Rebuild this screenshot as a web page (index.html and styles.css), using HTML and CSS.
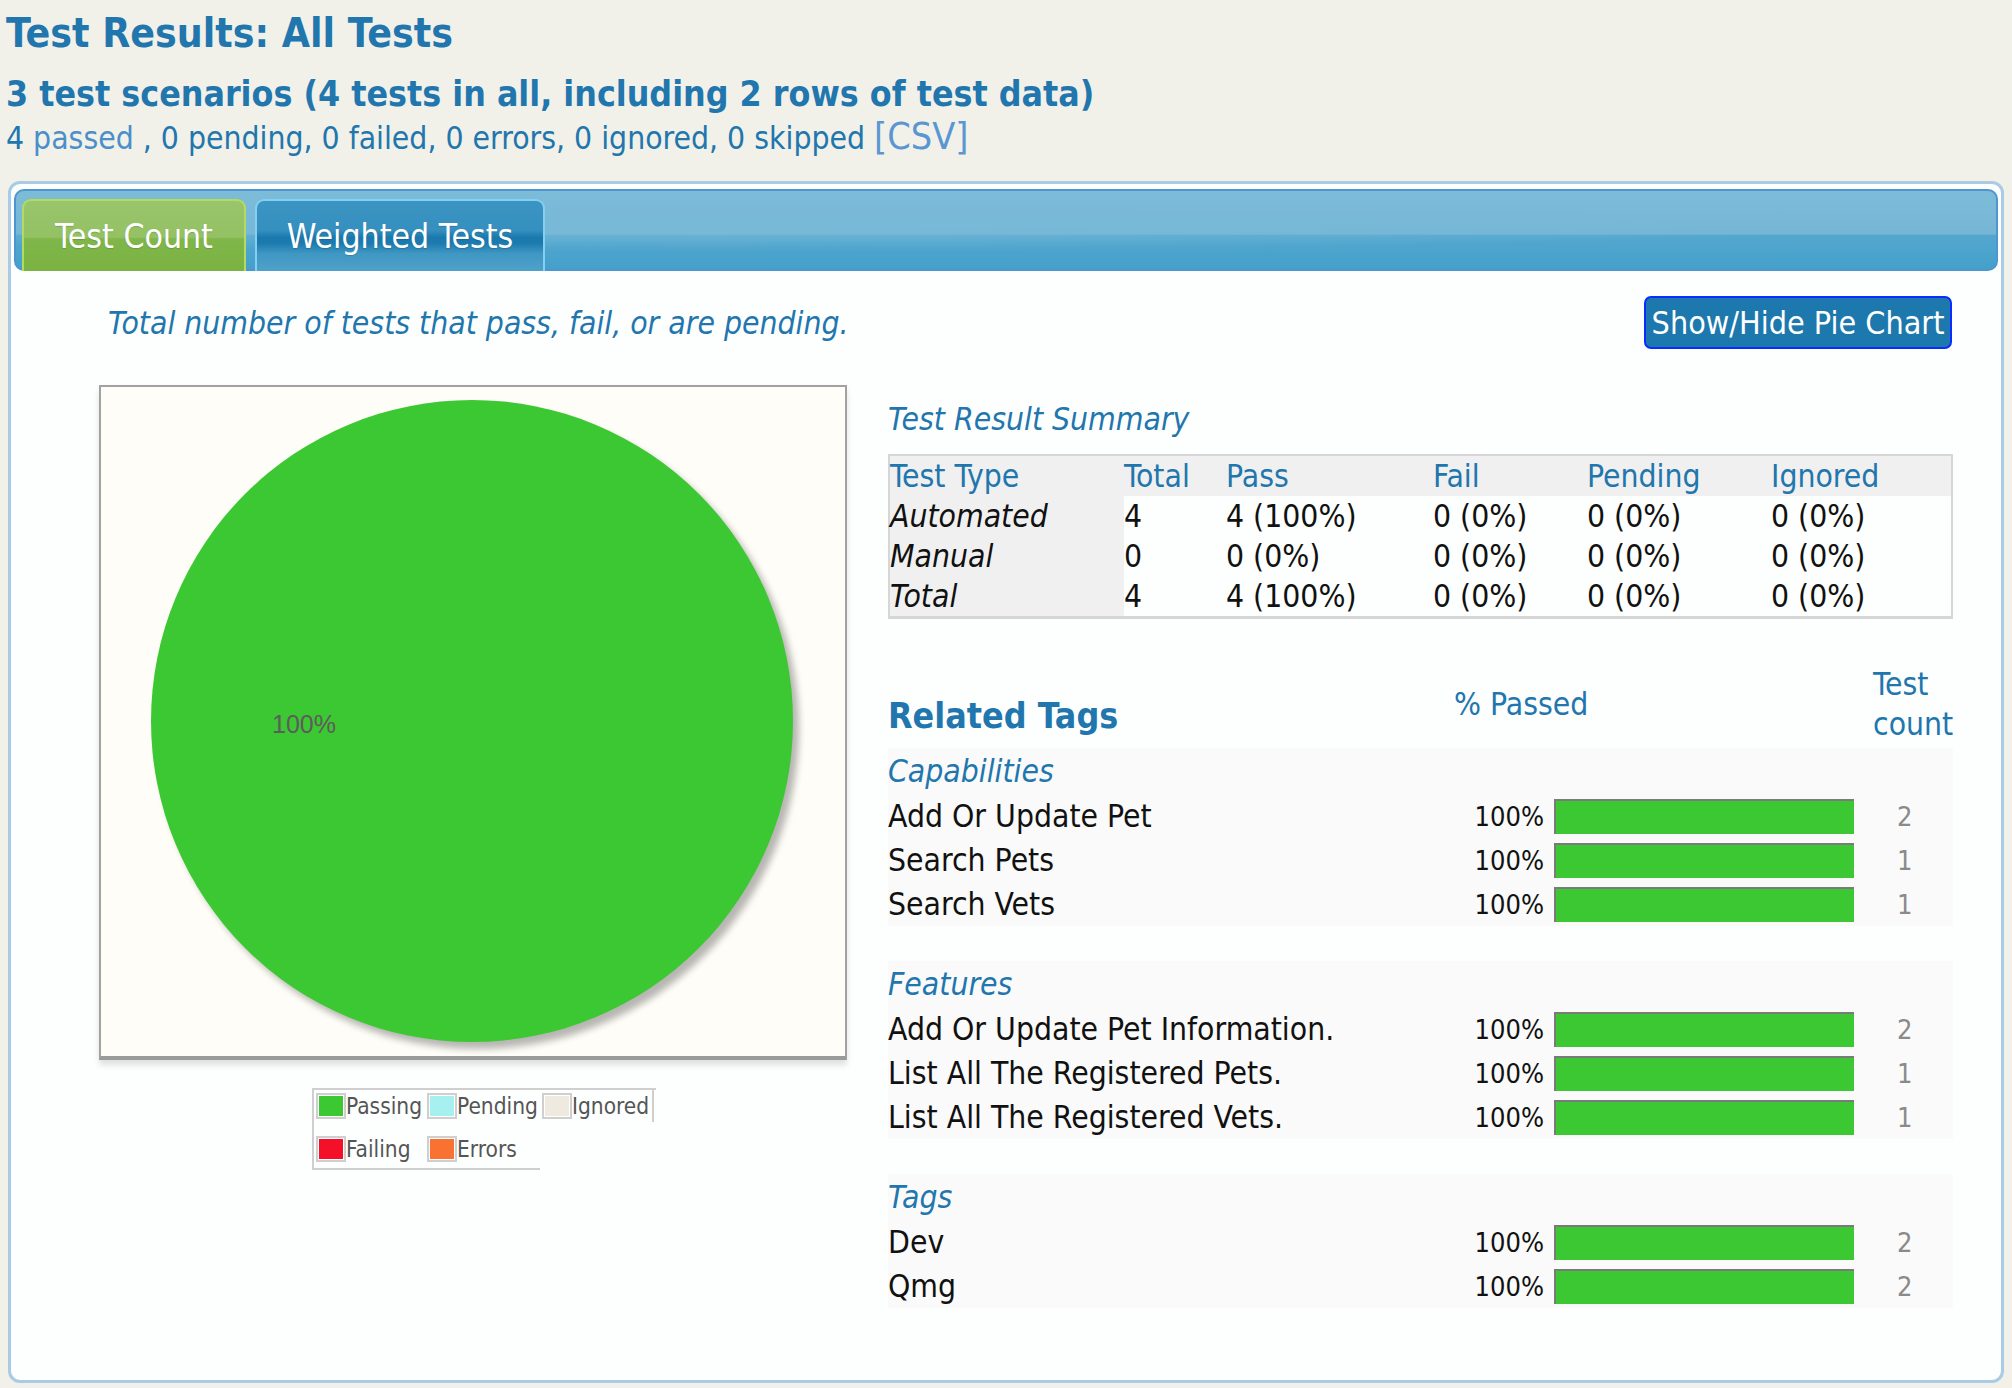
FILE: index.html
```html
<!DOCTYPE html>
<html>
<head>
<meta charset="utf-8">
<title>Test Results: All Tests</title>
<link rel="stylesheet" href="styles.css">
</head>
<body>
<header class="summary">
  <h1 class="title">Test Results: All Tests</h1>
  <h2 class="subtitle">3 test scenarios (4 tests in all, including 2 rows of test data)</h2>
  <p class="stats">4 <a class="passed">passed</a> , 0 pending, 0 failed, 0 errors, 0 ignored, 0 skipped <a class="csv">[CSV]</a></p>
</header>

<section class="panel">
  <nav class="tabbar">
    <div class="tab tab-green">Test Count</div>
    <div class="tab tab-blue">Weighted Tests</div>
  </nav>

  <div class="content">
    <div class="toprow">
      <p class="desc">Total number of tests that pass, fail, or are pending.</p>
      <button class="toggle">Show/Hide Pie Chart</button>
    </div>

    <div class="columns">
      <div class="left">
        <div class="chartbox">
          <svg class="pie" viewBox="0 0 744 669" width="744" height="669">
            <defs>
              <filter id="blur" x="-10%" y="-10%" width="120%" height="120%">
                <feGaussianBlur stdDeviation="3.5"/>
              </filter>
            </defs>
            <circle cx="377" cy="341" r="321" fill="#000" opacity="0.28" filter="url(#blur)"/>
            <circle cx="371" cy="334" r="321" fill="#3cc832"/>
            <text x="171" y="346" class="pie-label">100%</text>
          </svg>
        </div>
        <div class="legend">
          <div class="lg-cell r1"><span class="sw"><i class="c-pass"></i></span>Passing</div>
          <div class="lg-cell r1"><span class="sw"><i class="c-pend"></i></span>Pending</div>
          <div class="lg-cell r1 last"><span class="sw"><i class="c-ign"></i></span>Ignored</div>
          <div class="lg-cell r2"><span class="sw"><i class="c-fail"></i></span>Failing</div>
          <div class="lg-cell r2"><span class="sw"><i class="c-err"></i></span>Errors</div>
        </div>
      </div>

      <div class="right">
        <h3 class="sum-title">Test Result Summary</h3>
        <table class="sum-table">
          <colgroup>
            <col class="w1"><col class="w2"><col class="w3"><col class="w4"><col class="w5"><col class="w6">
          </colgroup>
          <thead>
            <tr><th>Test Type</th><th>Total</th><th>Pass</th><th>Fail</th><th>Pending</th><th>Ignored</th></tr>
          </thead>
          <tbody>
            <tr><td class="type">Automated</td><td>4</td><td>4 (100%)</td><td>0 (0%)</td><td>0 (0%)</td><td>0 (0%)</td></tr>
            <tr><td class="type">Manual</td><td>0</td><td>0 (0%)</td><td>0 (0%)</td><td>0 (0%)</td><td>0 (0%)</td></tr>
            <tr><td class="type">Total</td><td>4</td><td>4 (100%)</td><td>0 (0%)</td><td>0 (0%)</td><td>0 (0%)</td></tr>
          </tbody>
        </table>

        <div class="tags-head">
          <h3 class="tags-title">Related Tags</h3>
          <div class="h-pass">% Passed</div>
          <div class="h-count">Test<br>count</div>
        </div>

        <div class="tag-group">
          <div class="group-name">Capabilities</div>
          <div class="tag-row"><span class="name">Add Or Update Pet</span><span class="pct">100%</span><span class="bar"></span><span class="count">2</span></div>
          <div class="tag-row"><span class="name">Search Pets</span><span class="pct">100%</span><span class="bar"></span><span class="count">1</span></div>
          <div class="tag-row"><span class="name">Search Vets</span><span class="pct">100%</span><span class="bar"></span><span class="count">1</span></div>
        </div>

        <div class="tag-group">
          <div class="group-name">Features</div>
          <div class="tag-row"><span class="name">Add Or Update Pet Information.</span><span class="pct">100%</span><span class="bar"></span><span class="count">2</span></div>
          <div class="tag-row"><span class="name">List All The Registered Pets.</span><span class="pct">100%</span><span class="bar"></span><span class="count">1</span></div>
          <div class="tag-row"><span class="name">List All The Registered Vets.</span><span class="pct">100%</span><span class="bar"></span><span class="count">1</span></div>
        </div>

        <div class="tag-group">
          <div class="group-name">Tags</div>
          <div class="tag-row"><span class="name">Dev</span><span class="pct">100%</span><span class="bar"></span><span class="count">2</span></div>
          <div class="tag-row"><span class="name">Qmg</span><span class="pct">100%</span><span class="bar"></span><span class="count">2</span></div>
        </div>
      </div>
    </div>
  </div>
</section>
</body>
</html>
```

FILE: styles.css
```css
* { box-sizing: border-box; }

html, body { margin: 0; }

body {
  background: #f1f1e9;
  font-family: "DejaVu Sans Condensed", "DejaVu Sans", sans-serif;
  font-stretch: condensed;
  color: #1a1a1a;
  padding: 0 8px 5px 6px;
}

/* ---------- header ---------- */
.title {
  margin: 0;
  padding-top: 9px;
  font-size: 40.6px;
  line-height: 48px;
  font-weight: bold;
  color: #2176ae;
}

.subtitle {
  margin: 15px 0 0;
  font-size: 35.4px;
  line-height: 44px;
  font-weight: bold;
  color: #2176ae;
}

.stats {
  margin: 2px 0 0;
  font-size: 31.6px;
  line-height: 40px;
  color: #2176ae;
}

.stats .passed { color: #4a8fc9; }

.stats .csv {
  color: #5a97d2;
  font-size: 37.5px;
  line-height: 1;
}

/* ---------- panel ---------- */
.panel {
  margin: 23px 0 0 2px;
  height: 1202px;
  border: 3px solid #a9cbe5;
  border-radius: 12px;
  background: #fdfefe;
  padding: 5px 3px 0;
}

.tabbar {
  display: flex;
  gap: 9px;
  height: 82px;
  padding: 8px 6px 0;
  border: 2px solid #4e96cf;
  border-radius: 10px;
  background:
    radial-gradient(ellipse 60% 30% at 35% 46%, rgba(120,186,216,0.9) 0%, rgba(120,186,216,0) 100%),
    linear-gradient(#7dbcd9 0%, #76b6d5 55%, #53a7cf 57%, #44a0cb 100%);
}

.tab {
  height: 72px;
  border: 2px solid;
  border-bottom: none;
  border-radius: 9px 9px 0 0;
  color: #fff;
  font-size: 33.5px;
  display: flex;
  align-items: center;
  justify-content: center;
  text-shadow: 0 1px 1px rgba(0,0,0,0.15);
}

.tab-green {
  width: 224px;
  border-color: #b3dc5c;
  background: linear-gradient(#99c56c 0%, #93c163 52%, #80b64a 54%, #7bb342 100%);
}

.tab-blue {
  width: 290px;
  border-color: #83d0f2;
  background: linear-gradient(#3c94c2 0%, #3590bf 42%, #1a78ad 52%, #1c7aae 60%, #3f97c3 75%, #4fa1c9 100%);
}

/* ---------- content ---------- */
.content {
  padding: 25px 45px 0 85px;
}

.toprow {
  display: flex;
  justify-content: space-between;
  align-items: center;
  height: 53px;
}

.desc {
  margin: 0 0 0 9px;
  font-size: 31.6px;
  line-height: 40px;
  font-style: italic;
  color: #2176ae;
}

.toggle {
  width: 308px;
  height: 53px;
  margin-right: 1px;
  padding: 0;
  background: #1d78ad;
  border: 2px solid #0a2cff;
  border-radius: 7px;
  color: #fff;
  font-family: inherit;
  font-stretch: condensed;
  font-size: 32px;
}

.columns {
  display: flex;
  gap: 41px;
  margin-top: 36px;
}

.left { width: 748px; flex: none; }
.right { flex: 1; }

/* ---------- pie ---------- */
.chartbox {
  width: 748px;
  height: 675px;
  border: 2px solid #a2a2a2;
  border-bottom: 4px solid #9a9a9a;
  background: #fffdf7;
  box-shadow: 0 5px 6px rgba(0,0,0,0.12);
}

.pie { display: block; }

.pie-label {
  font-family: "Liberation Sans", Arial, sans-serif;
  font-size: 25px;
  fill: #5c5c5c;
}

.legend {
  display: grid;
  grid-template-columns: 111px 115px 114px;
  grid-template-rows: 32px 48px;
  width: 344px;
  margin: 28px 0 0 213px;
  border-left: 2px solid #cfcfcf;
  border-top: 2px solid #cfcfcf;
  font-size: 22.5px;
  color: #555;
}

.lg-cell {
  display: flex;
  align-items: center;
  padding-left: 2px;
}

.lg-cell.last { border-right: 2px solid #cfcfcf; }
.lg-cell.r2 {
  border-bottom: 2px solid #cfcfcf;
  padding-top: 8px;
}

.sw {
  display: inline-flex;
  width: 30px;
  height: 26px;
  border: 2px solid #cfcfcf;
  padding: 1px;
}

.sw i { flex: 1; display: block; }
.c-pass { background: #3cc832; }
.c-pend { background: #a6f0f0; }
.c-ign  { background: #eeeae0; }
.c-fail { background: #f5102a; }
.c-err  { background: #f97232; }

/* ---------- summary table ---------- */
.sum-title {
  margin: 14px 0 0;
  font-size: 31.6px;
  line-height: 40px;
  font-style: italic;
  font-weight: normal;
  color: #2176ae;
}

.sum-table {
  margin-top: 15px;
  width: 100%;
  table-layout: fixed;
  border-collapse: collapse;
  border: 2px solid #d6d6d6;
  border-bottom-width: 3px;
  font-size: 31.6px;
}

.w1 { width: 235px; }
.w2 { width: 102px; }
.w3 { width: 207px; }
.w4 { width: 154px; }
.w5 { width: 184px; }

.sum-table th,
.sum-table td {
  height: 40px;
  line-height: 40px;
  padding: 0;
  text-align: left;
  white-space: nowrap;
}

.sum-table th {
  background: #f0f0f0;
  font-weight: normal;
  color: #2176ae;
}

.sum-table td { color: #111; }

.sum-table td.type {
  background: #f0f0f0;
  font-style: italic;
}

/* ---------- related tags ---------- */
.tags-head {
  display: flex;
  height: 80px;
  margin-top: 45px;
  font-size: 31.6px;
  color: #2176ae;
}

.tags-title {
  flex: 1;
  align-self: flex-end;
  margin: 0 0 6px;
  font-size: 35.5px;
  line-height: 44px;
  font-weight: bold;
}

.h-pass {
  width: 400px;
  align-self: center;
  line-height: 40px;
}

.h-count {
  width: 80px;
  margin-left: 19px;
  line-height: 40px;
}

.tag-group {
  margin-top: 4px;
  background: #fafafa;
  font-size: 31.6px;
}

.tag-group + .tag-group { margin-top: 35px; }

.group-name {
  line-height: 46px;
  font-style: italic;
  color: #2176ae;
}

.tag-row {
  display: flex;
  align-items: center;
  height: 44px;
}

.name { flex: 1; color: #111; }

.pct {
  width: 90px;
  text-align: right;
  font-size: 27px;
  color: #111;
}

.bar {
  width: 300px;
  height: 35px;
  margin-left: 10px;
  background: #3cc832;
  border-top: 2px solid #7a7a7a;
  border-left: 2px solid #7a7a7a;
}

.count {
  width: 80px;
  margin-left: 19px;
  padding-left: 24px;
  font-size: 27px;
  color: #8a8a8a;
}
```
